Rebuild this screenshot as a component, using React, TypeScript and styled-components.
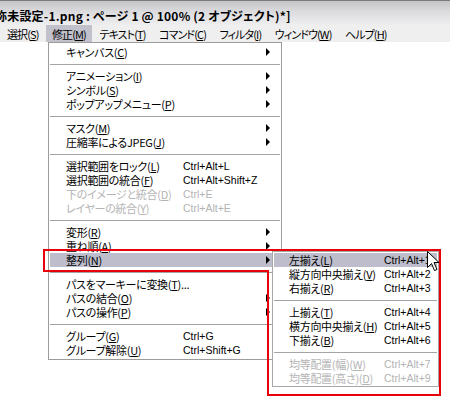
import React from 'react';
import styled, { createGlobalStyle } from 'styled-components';

const FONT = `"Noto Sans CJK JP", "Liberation Sans", sans-serif`;

const GlobalStyle = createGlobalStyle`
  html, body { margin: 0; padding: 0; background: #fff; }
  body { width: 450px; height: 397px; overflow: hidden; font-family: ${FONT}; }
`;

type Entry =
  | { sep: true }
  | {
      sep?: false;
      label: string;
      hot: string;
      tail?: string;
      shortcut?: string;
      sub?: boolean;
      disabled?: boolean;
      active?: boolean;
    };

const mainItems: Entry[] = [
  { label: 'キャンバス', hot: 'C', sub: true },
  { sep: true },
  { label: 'アニメーション', hot: 'I', sub: true },
  { label: 'シンボル', hot: 'S', sub: true },
  { label: 'ポップアップメニュー', hot: 'P', sub: true },
  { sep: true },
  { label: 'マスク', hot: 'M', sub: true },
  { label: '圧縮率によるJPEG', hot: 'J', sub: true },
  { sep: true },
  { label: '選択範囲をロック', hot: 'L', shortcut: 'Ctrl+Alt+L' },
  { label: '選択範囲の統合', hot: 'F', shortcut: 'Ctrl+Alt+Shift+Z' },
  { label: '下のイメージと統合', hot: 'D', shortcut: 'Ctrl+E', disabled: true },
  { label: 'レイヤーの統合', hot: 'Y', shortcut: 'Ctrl+Alt+E', disabled: true },
  { sep: true },
  { label: '変形', hot: 'R', sub: true },
  { label: '重ね順', hot: 'A', sub: true },
  { label: '整列', hot: 'N', sub: true, active: true },
  { sep: true },
  { label: 'パスをマーキーに変換', hot: 'T', tail: '...' },
  { label: 'パスの結合', hot: 'O', sub: true },
  { label: 'パスの操作', hot: 'P', sub: true },
  { sep: true },
  { label: 'グループ', hot: 'G', shortcut: 'Ctrl+G' },
  { label: 'グループ解除', hot: 'U', shortcut: 'Ctrl+Shift+G' },
];

const alignItems: Entry[] = [
  { label: '左揃え', hot: 'L', shortcut: 'Ctrl+Alt+1', active: true },
  { label: '縦方向中央揃え', hot: 'V', shortcut: 'Ctrl+Alt+2' },
  { label: '右揃え', hot: 'R', shortcut: 'Ctrl+Alt+3' },
  { sep: true },
  { label: '上揃え', hot: 'T', shortcut: 'Ctrl+Alt+4' },
  { label: '横方向中央揃え', hot: 'H', shortcut: 'Ctrl+Alt+5' },
  { label: '下揃え', hot: 'B', shortcut: 'Ctrl+Alt+6' },
  { sep: true },
  { label: '均等配置(幅)', hot: 'W', shortcut: 'Ctrl+Alt+7', disabled: true },
  { label: '均等配置(高さ)', hot: 'D', shortcut: 'Ctrl+Alt+9', disabled: true },
];

const menuBar = [
  { label: '選択', hot: 'S' },
  { label: '修正', hot: 'M', open: true },
  { label: 'テキスト', hot: 'T' },
  { label: 'コマンド', hot: 'C' },
  { label: 'フィルタ', hot: 'I' },
  { label: 'ウィンドウ', hot: 'W' },
  { label: 'ヘルプ', hot: 'H' },
];

const Menu = ({ items, labelWidth, padLeft }: { items: Entry[]; labelWidth: number; padLeft: number }) => (
  <>
    {items.map((it, i) =>
      it.sep ? (
        <Separator key={i} />
      ) : (
        <Row key={i} $active={it.active} $disabled={it.disabled} $labelWidth={labelWidth} $padLeft={padLeft}>
          <span>
            {it.label}(<U>{it.hot}</U>){it.tail}
          </span>
          <Shortcut>{it.shortcut}</Shortcut>
          {it.sub ? <Arrow /> : <span />}
        </Row>
      )
    )}
  </>
);

const App = () => (
  <Window>
    <GlobalStyle />
    <TitleBar>
      <TitleText>称未設定-1.png : ページ 1 @ 100% (2 オブジェクト)*]</TitleText>
    </TitleBar>
    <MenuBar>
      {menuBar.map((m) => (
        <BarItem key={m.label} $open={m.open}>
          {m.label}(<U>{m.hot}</U>)
        </BarItem>
      ))}
    </MenuBar>
    <Canvas>
      <Dropdown>
        <Menu items={mainItems} labelWidth={117} padLeft={16} />
      </Dropdown>
      <SubMenu>
        <Menu items={alignItems} labelWidth={95} padLeft={15} />
      </SubMenu>
      <Annotation width="450" height="397" viewBox="0 0 450 397">
        <path d="M44 250 H440 V395 H268 V271 H44 Z" fill="none" stroke="#e8000b" strokeWidth="2" />
      </Annotation>
      <Cursor width="13" height="21" viewBox="0 0 13 21">
        <path
          d="M0.5 0.5 V16.5 L4.5 12.5 L7.5 19.5 L10 18.5 L7 11.5 H12 Z"
          fill="#fff"
          stroke="#000"
          strokeWidth="1"
          strokeLinejoin="miter"
        />
      </Cursor>
    </Canvas>
  </Window>
);

const Window = styled.div`
  position: relative;
  width: 450px;
  height: 397px;
  overflow: hidden;
  background: #fff;
  font-family: ${FONT};
  font-feature-settings: 'palt';
  color: #000;
`;

const TitleBar = styled.div`
  height: 19px;
  padding-top: 5px;
  border-top: 1px solid #7c7c7c;
  background: linear-gradient(#c4c4c8, #dcdcdf 45%, #eeeeef);
  display: flex;
  align-items: center;
  overflow: hidden;
  white-space: nowrap;
`;

const TitleText = styled.div`
  margin-left: -5px;
  font-size: 12px;
  font-weight: bold;
  line-height: 16px;
  letter-spacing: 0.2px;
`;

const MenuBar = styled.div`
  height: 17px;
  background: #efefef;
  display: flex;
  align-items: stretch;
  padding-left: 1px;
  font-size: 11px;
  letter-spacing: -0.9px;
  white-space: nowrap;
`;

const BarItem = styled.div<{ $open?: boolean }>`
  flex-shrink: 0;
  display: flex;
  align-items: center;
  padding: 0 6.5px 0 6px;
  margin-right: 1px;
  background: ${(p) => (p.$open ? '#c1c1cc' : 'transparent')};
`;

const U = styled.span`
  text-decoration: underline;
  text-underline-offset: 1px;
`;

const Canvas = styled.div`
  position: relative;
  height: 355px;
`;

const Dropdown = styled.div`
  position: absolute;
  left: 48px;
  top: 0;
  width: 230px;
  padding: 2px 1px;
  background: #fff;
  border: 1px solid #9c9c9c;
  display: flex;
  flex-direction: column;
`;

const SubMenu = styled(Dropdown)`
  left: 272px;
  top: 209px;
  width: 163px;
  padding: 1px;
  border-color: #a8a8a8;
`;

const Row = styled.div<{ $active?: boolean; $disabled?: boolean; $labelWidth: number; $padLeft: number }>`
  height: 14px;
  display: grid;
  grid-template-columns: ${(p) => p.$labelWidth}px 1fr 14px;
  align-items: center;
  padding-left: ${(p) => p.$padLeft}px;
  font-size: 11px;
  line-height: 14px;
  letter-spacing: -0.3px;
  white-space: nowrap;
  color: ${(p) => (p.$disabled ? '#b4b4b4' : '#000')};
  background: ${(p) => (p.$active ? '#bdbdcb' : 'transparent')};
`;

const Shortcut = styled.span`
  font-family: "Liberation Sans", sans-serif;
  font-size: 10.5px;
  letter-spacing: 0;
`;

const Arrow = styled.span`
  width: 0;
  height: 0;
  border-top: 4px solid transparent;
  border-bottom: 4px solid transparent;
  border-left: 4px solid #000;
  justify-self: start;
`;

const Separator = styled.div`
  height: 10px;
  display: flex;
  align-items: center;
  &::after {
    content: '';
    flex: 1;
    height: 1px;
    background: #a4a4a4;
  }
`;

const Annotation = styled.svg`
  position: absolute;
  left: 0;
  top: -42px;
  pointer-events: none;
`;

const Cursor = styled.svg`
  position: absolute;
  left: 427px;
  top: 209px;
`;

export default App;
